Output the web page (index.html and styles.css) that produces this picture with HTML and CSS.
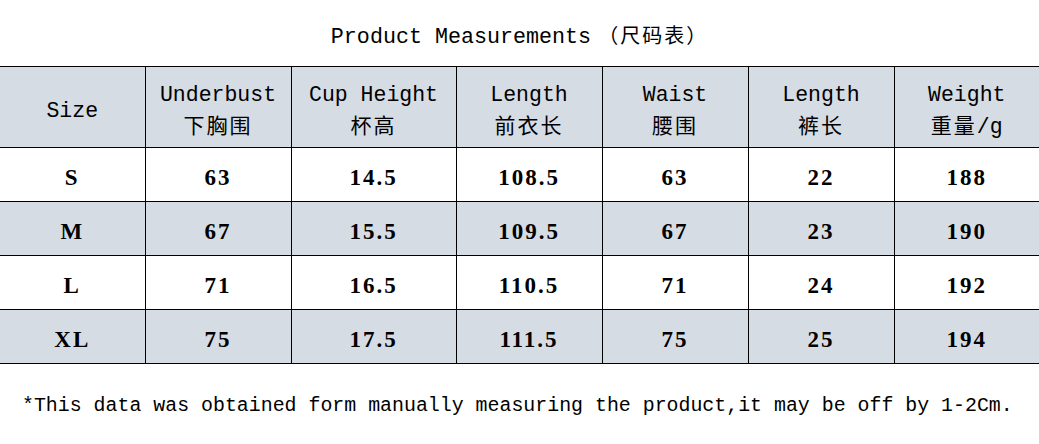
FILE: index.html
```html
<!DOCTYPE html>
<html lang="zh-CN">
<head>
    <meta charset="UTF-8">
    <meta name="viewport" content="width=device-width, initial-scale=1.0">
    <title>Product Measurements</title>
    <link rel="stylesheet" href="styles.css">
</head>
<body>
    <div class="page">
        <h1 class="title">Product Measurements <span class="cjk">（尺码表）</span></h1>

        <table class="sizes">
            <colgroup>
                <col style="width: 145px">
                <col style="width: 146px">
                <col style="width: 165px">
                <col style="width: 146px">
                <col style="width: 146px">
                <col style="width: 146px">
                <col style="width: 145px">
            </colgroup>
            <thead>
                <tr>
                    <th>Size</th>
                    <th>Underbust<br><span class="cjk">下胸围</span></th>
                    <th>Cup Height<br><span class="cjk">杯高</span></th>
                    <th>Length<br><span class="cjk">前衣长</span></th>
                    <th>Waist<br><span class="cjk">腰围</span></th>
                    <th>Length<br><span class="cjk">裤长</span></th>
                    <th>Weight<br><span class="cjk">重量</span>/g</th>
                </tr>
            </thead>
            <tbody>
                <tr>
                    <td>S</td><td>63</td><td>14.5</td><td>108.5</td><td>63</td><td>22</td><td>188</td>
                </tr>
                <tr class="alt">
                    <td>M</td><td>67</td><td>15.5</td><td>109.5</td><td>67</td><td>23</td><td>190</td>
                </tr>
                <tr>
                    <td>L</td><td>71</td><td>16.5</td><td>110.5</td><td>71</td><td>24</td><td>192</td>
                </tr>
                <tr class="alt">
                    <td>XL</td><td>75</td><td>17.5</td><td>111.5</td><td>75</td><td>25</td><td>194</td>
                </tr>
            </tbody>
        </table>

        <p class="note">*This data was obtained form manually measuring the product,it may be off by 1-2Cm.</p>
    </div>
</body>
</html>
```

FILE: styles.css
```css
body {
    margin: 0;
    padding: 0;
    background-color: #fff;
    color: #000;
    font-family: "Liberation Mono", "Noto Sans CJK SC", monospace;
}

.page {
    width: 1039px;
}

.title {
    margin: 0;
    height: 66px;
    box-sizing: border-box;
    padding-top: 21px;
    text-align: center;
    font-size: 21.7px;
    font-weight: normal;
    line-height: 28px;
}

.title .cjk {
    font-size: 20px;
    margin-left: -6px;
}

.cjk {
    font-family: "Noto Sans CJK SC", sans-serif;
    font-size: 21px;
    letter-spacing: 2px;
}

.sizes {
    width: 1039px;
    border-collapse: collapse;
    table-layout: fixed;
}

.sizes th,
.sizes td {
    border: 1px solid #000;
    padding: 0;
    text-align: center;
    vertical-align: middle;
}

.sizes th:first-child,
.sizes td:first-child {
    border-left: none;
}

.sizes th:last-child,
.sizes td:last-child {
    border-right: none;
}

.sizes thead tr {
    height: 81px;
    background-color: #d6dce4;
}

.sizes th {
    font-size: 21.5px;
    font-weight: normal;
    line-height: 29px;
    padding-top: 9px;
}

.sizes tbody tr {
    height: 54px;
}

.sizes td {
    padding-top: 6px;
    font-family: "Liberation Serif", serif;
    font-size: 23px;
    font-weight: bold;
    letter-spacing: 2px;
}

.sizes tr.alt {
    background-color: #d6dce4;
}

.note {
    margin: 28px 0 0 22px;
    font-size: 19.9px;
    line-height: 28px;
}
```
